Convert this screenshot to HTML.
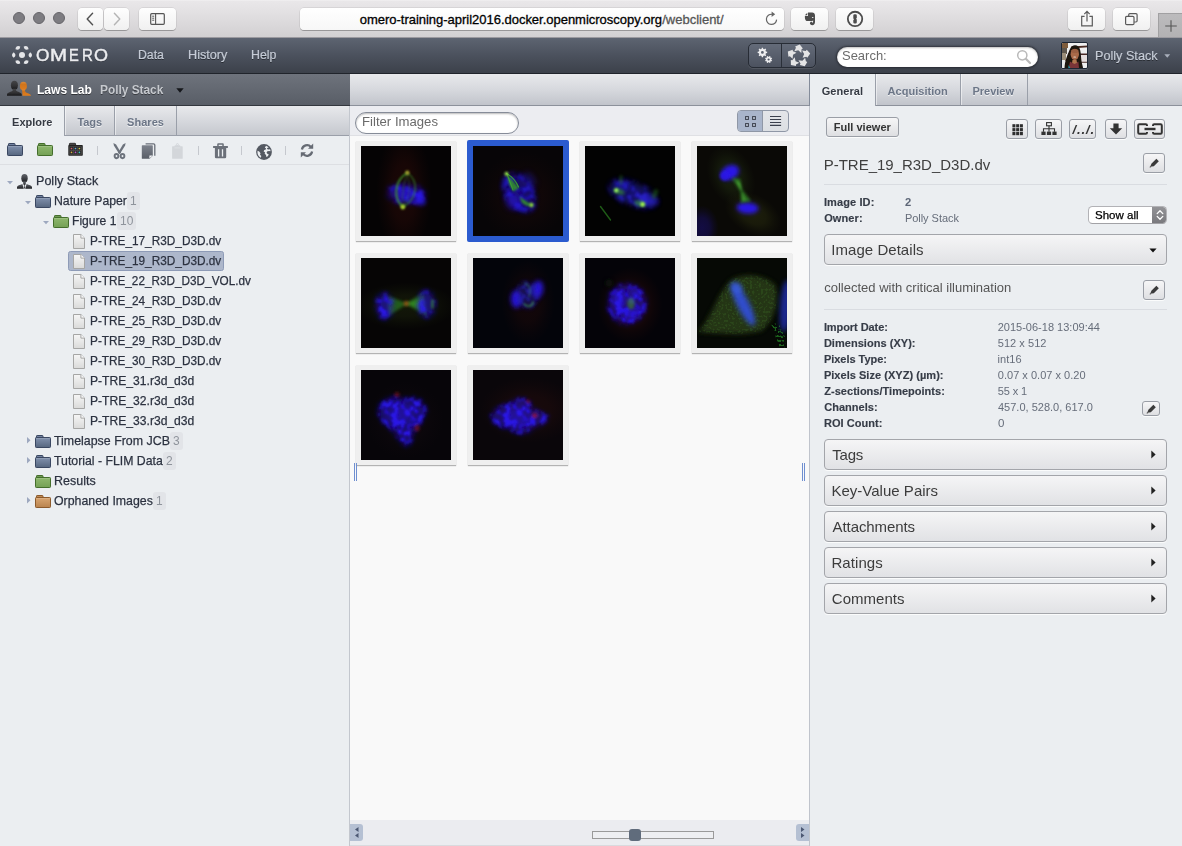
<!DOCTYPE html>
<html lang="en">
<head>
<meta charset="utf-8">
<title>OMERO webclient</title>
<style>

*{box-sizing:border-box;margin:0;padding:0}
html,body{width:1182px;height:846px;overflow:hidden;background:#ebeef1}
body{font-family:"Liberation Sans",Arial,Helvetica,sans-serif;font-size:13px;color:#3f4550;position:relative}
#app{position:absolute;left:0;top:38px;width:1182px;height:808px;overflow:hidden;will-change:transform}
#appi{position:absolute;left:0;top:-38px;width:1182px;height:846px}
.t{position:absolute;white-space:nowrap;display:block}
.a{position:absolute;display:block}
svg{position:absolute;display:block;overflow:visible}
/* Safari chrome */
#chrome{position:absolute;left:0;top:0;width:1182px;height:38px;background:linear-gradient(#f4f3f4 0,#e9e7e9 1px,#e4e2e4 10px,#d2d0d2 37px,#a3a1a5 37px,#94939a 38px)}

.tl{position:absolute;top:11.800px;width:12.400px;height:12.400px;border-radius:50%;background:#7d7c81;border:1px solid #66656a}
.sbtn{position:absolute;top:8px;height:22px;border-radius:4px;background:linear-gradient(#fefefe,#f0f0f0);box-shadow:0 0 0 .5px rgba(0,0,0,.13),0 1px .5px rgba(0,0,0,.24)}
#url{position:absolute;left:300px;top:8px;width:484px;height:22px;border-radius:4px;background:linear-gradient(#fff,#f7f7f7);box-shadow:0 0 0 .5px rgba(0,0,0,.13),0 1px .5px rgba(0,0,0,.24)}
#newtab{position:absolute;left:1158px;top:13px;width:24px;height:24px;background:linear-gradient(#bcbbbd,#b3b2b4);border-left:1px solid #a1a0a2;border-top:1px solid #a1a0a2}
/* OMERO header */
#hdr{position:absolute;left:0;top:37px;width:1182px;height:37px;background:linear-gradient(#5e6572 0,#4b515d 50%,#3b4049 100%)}
#hdr:after{content:"";position:absolute;left:0;top:36px;width:1182px;height:1px;background:#20242b}
.nav{color:#c6ccd7;-webkit-text-stroke:.2px #c6ccd7;text-shadow:0 1px 0 rgba(0,0,0,.45)}
#hbtn{position:absolute;left:748.300px;top:43.200px;width:67.400px;height:25.200px;border-radius:5px;border:1.300px solid #272c35;background:linear-gradient(#646b79,#4c525f);box-shadow:0 1px 0 rgba(255,255,255,.1)}
#hbtn i{position:absolute;left:31.500px;top:0;width:1.200px;height:23px;background:#2a2f38}
#search{position:absolute;left:837px;top:47px;width:201px;height:20px;border-radius:10px;background:#fff;box-shadow:0 0 2px 1px rgba(20,22,28,.55),inset 0 1px 2px rgba(0,0,0,.25)}
#avatar{position:absolute;left:1061px;top:42px;width:27px;height:27px;border:1px solid #1c2635;border-radius:2px;background:#4a3a30;overflow:hidden;box-shadow:0 1px 0 rgba(255,255,255,.15)}
/* group bar */
#gbar{position:absolute;left:0;top:74px;width:350px;height:32px;background:linear-gradient(#6e737c,#585d66)}
#gbar:after{content:"";position:absolute;left:0;top:31px;width:350px;height:1px;background:#33373e}
.lbar{position:absolute;top:74px;height:32px;background:linear-gradient(#e8e9ec,#d6d8dd 50%,#c0c3ca)}
.lbar:after{content:"";position:absolute;left:0;bottom:0;width:100%;height:1px;background:#8c919b}
.tab{position:absolute;top:0;border-right:1px solid #9a9fa9;box-shadow:inset 1px 0 0 rgba(255,255,255,.5)}
.tab.on{background:#ebeef1;z-index:2;box-shadow:none}
.tabt{color:#6c7687;text-shadow:0 1px 0 rgba(255,255,255,.7);z-index:3}
.tabt.on{color:#353a43}
/* left */
#left{position:absolute;left:0;top:106px;width:350px;height:740px;background:#ebeef1}
#lborder{position:absolute;left:349px;top:106px;width:1px;height:740px;background:#c3c7ce}
#ltabs{position:absolute;left:0;top:106px;width:349px;height:30px;background:linear-gradient(#e8e9ec,#d6d8dd 50%,#c4c7cd)}
#ltabs:after{content:"";position:absolute;left:0;bottom:0;width:100%;height:1px;background:#9a9fa9}
#ltoolb{position:absolute;left:0;top:164px;width:349px;height:1px;background:#dddfe3}
.tsep{position:absolute;top:146px;width:1px;height:9px;background:#c5c8ce}
.tr{color:#2c3240;-webkit-text-stroke:.25px #2c3240}
.cnt{position:absolute;height:18px;border-radius:3px;background:#e2e4e8}
.sel{position:absolute;border:1px solid #8e9bb7;border-radius:2.500px;background:#adb7cb}
/* center */
#center{position:absolute;left:350px;top:106px;width:459px;height:740px;background:#f9f9f9}
#cfilter{position:absolute;left:350px;top:106px;width:459px;height:30px;background:#ecedf1}
#cfilter:after{content:"";position:absolute;left:0;bottom:0;width:100%;height:1px;background:#dfe0e4}
#finput{position:absolute;left:355px;top:112px;width:164px;height:22px;border:1px solid #868c98;border-radius:11px;background:#fff;box-shadow:inset 0 1px 2px rgba(0,0,0,.28)}
.th{position:absolute;width:100px;height:100px;background:#efefef;box-shadow:0 1px 1px rgba(0,0,0,.28)}
.th svg{left:5px;top:5px}
.th.s{background:#2b5bcf;box-shadow:0 0 0 1px #2b5bcf;border-radius:1px}
#cbot{position:absolute;left:350px;top:820px;width:459px;height:26px;background:#ebecf0}
#cbot:after{content:"";position:absolute;left:0;top:25px;width:100%;height:1px;background:#d9dade}
.cb{position:absolute;top:824px;width:13px;height:17px;background:#b5c0d3}
.hd{position:absolute;top:463px;width:1px;height:18px;background:#6f8fd0}
#strack{position:absolute;left:592px;top:831px;width:122px;height:8px;border:1px solid #9a9a9a;background:#eeeff2}
#sthumb{position:absolute;left:629px;top:829px;width:12px;height:12px;border-radius:3px;background:#606c7c}
#vt{position:absolute;left:737px;top:110px;width:52px;height:22px;border:1px solid #8f97a6;border-radius:4px;background:linear-gradient(#e3e5e9,#dcdfe3);overflow:hidden}
#vt i{position:absolute;left:0;top:0;width:25px;height:20px;background:#a9b5cb;border-right:1px solid #8f97a6}
/* right */
#right{position:absolute;left:810px;top:106px;width:372px;height:740px;background:#ebeef1}
#rborder{position:absolute;left:809px;top:74px;width:1px;height:772px;background:linear-gradient(#848c9a 0,#848c9a 32px,#c0c4cc 32px)}
.btn{position:absolute;border:1px solid #9a9ea6;border-radius:3px;background:linear-gradient(#f6f6f7,#dedfe2);box-shadow:0 1px 0 rgba(255,255,255,.8)}
.acc{position:absolute;left:824px;width:343px;height:31px;border:1px solid #a3a5aa;border-radius:4px;background:linear-gradient(#f5f5f6,#e1e2e5);box-shadow:0 1px 0 rgba(255,255,255,.8)}
.hr{position:absolute;left:824px;width:343px;height:1px;background:#d9dce1}
.k{color:#363c47;-webkit-text-stroke:.15px #363c47}
.v{color:#666d7a}

</style>
</head>
<body>
<div id="chrome">
<div class="tl" style="left:13px"></div>
<div class="tl" style="left:33px"></div>
<div class="tl" style="left:53px"></div>
<div class="sbtn" style="left:78px;width:25px"></div>
<div class="sbtn" style="left:104px;width:25px"></div>
<div class="sbtn" style="left:139px;width:37px"></div>
<div id="url"></div>
<div class="sbtn" style="left:791px;width:37px"></div>
<div class="sbtn" style="left:836px;width:37px"></div>
<div class="sbtn" style="left:1068px;width:37px"></div>
<div class="sbtn" style="left:1113px;width:37px"></div>
<div id="newtab"></div>
<svg style="left:78px;top:8px" width="25" height="22" viewBox="0 0 25 22"><path d="M14.6 5.2 L9.2 11 L14.6 16.8" fill="none" stroke="#505050" stroke-width="1.4" stroke-linecap="round" stroke-linejoin="round"/></svg>
<svg style="left:104px;top:8px" width="25" height="22" viewBox="0 0 25 22"><path d="M10.4 5.2 L15.8 11 L10.4 16.8" fill="none" stroke="#b4b4b4" stroke-width="1.4" stroke-linecap="round" stroke-linejoin="round"/></svg>
<svg style="left:139px;top:8px" width="37" height="22" viewBox="0 0 37 22"><rect x="11.7" y="5.7" width="13.6" height="10.6" rx="1" fill="none" stroke="#555" stroke-width="1.2"/><path d="M16.6 5.7V16.3" stroke="#555" stroke-width="1.1"/><path d="M13.2 8.2h2M13.2 10.2h2M13.2 12.2h2" stroke="#555" stroke-width="1"/></svg>
<svg style="left:764px;top:10px" width="16" height="18" viewBox="0 0 16 18"><path d="M12.6 9.6a5.1 5.1 0 1 1-4.4-5.3" fill="none" stroke="#666" stroke-width="1.2"/><path d="M7.6 1.4l3.6 2.8-3.6 2.7z" fill="#666"/></svg>
<svg style="left:803px;top:11px" width="14" height="16" viewBox="0 0 14 16"><g fill="#4c4c4c"><path d="M5 1.600h4.100c1.800 0 2.900 1 2.900 3v6.500c0 2-1 3.100-2.700 3.100-1.500 0-2.400-.8-2.400-1.900 0-.9.700-1.500 1.400-1.500.7 0 1.200.5 1.200 1.100.5-.2.600-.8.600-1.600v-.9c-.6.500-1.400.7-2.400.7H4.600C3 10.100 1.900 8.700 1.900 6.700V4.900H5z"/><path d="M1.900 4.200L4.300 1.700V4.200z"/></g><ellipse cx="9.700" cy="6.500" rx=".8" ry=".55" fill="#f2f2f2"/></svg>
<svg style="left:846px;top:10px" width="18" height="18" viewBox="0 0 18 18"><circle cx="9.050" cy="8.950" r="7.200" fill="none" stroke="#4d4d4d" stroke-width="1.800"/><path d="M7.300 5.600q0-1.300 1.300-1.300h.9q1.300 0 1.300 1.300v2.300l-.8.800.8.800v2.800q0 1.300-1.300 1.300h-.9q-1.300 0-1.300-1.300V10l.8-.8-.8-.8z" fill="#4d4d4d"/></svg>
<svg style="left:1080px;top:10px" width="14" height="18" viewBox="0 0 14 18"><path d="M4.600 6.400H1.700v9.400h10.600V6.400H9.400" fill="none" stroke="#5a5a5a" stroke-width="1.200"/><path d="M7 11.500V1.500M4.300 4.100 7 1.400l2.700 2.700" fill="none" stroke="#5a5a5a" stroke-width="1.200"/></svg>
<svg style="left:1124px;top:12px" width="15" height="14" viewBox="0 0 15 14"><rect x="1.600" y="4.300" width="8.400" height="8.400" rx="1.200" fill="none" stroke="#5a5a5a" stroke-width="1.200"/><path d="M4.700 4.200V2.800q0-1.200 1.200-1.200h6q1.200 0 1.200 1.200v6q0 1.200-1.200 1.200h-1.700" fill="none" stroke="#5a5a5a" stroke-width="1.200"/></svg>
<svg style="left:1164px;top:19px" width="14" height="14" viewBox="0 0 14 14"><path d="M7 1.200v11.600M1.200 7h11.600" stroke="#555" stroke-width="1.100"/></svg>
<span class="t" style="left:359.78px;top:12.00px;font-size:13px;line-height:16px;letter-spacing:-0.021px;color:#000;-webkit-text-stroke:.3px #000;">omero-training-april2016.docker.openmicroscopy.org</span>
<span class="t" style="left:662.20px;top:12.00px;font-size:13px;line-height:16px;letter-spacing:-0.003px;color:#555;-webkit-text-stroke:.3px #555;">/webclient/</span>
</div>
<div id="app"><div id="appi">
<div id="hdr"></div>
<svg style="left:10.800px;top:43.600px" width="22" height="22" viewBox="-11 -11 22 22"><g fill="#e4e5e8"><path transform="rotate(0) translate(8.3 0)" d="M0 -2.8Q3.500 0 0 2.800Q-3.500 0 0 -2.800Z"/><path transform="rotate(60) translate(8.3 0)" d="M0 -2.8Q3.500 0 0 2.800Q-3.500 0 0 -2.800Z"/><path transform="rotate(120) translate(8.3 0)" d="M0 -2.8Q3.500 0 0 2.800Q-3.500 0 0 -2.800Z"/><path transform="rotate(180) translate(8.3 0)" d="M0 -2.8Q3.500 0 0 2.800Q-3.500 0 0 -2.800Z"/><path transform="rotate(240) translate(8.3 0)" d="M0 -2.8Q3.500 0 0 2.800Q-3.500 0 0 -2.800Z"/><path transform="rotate(300) translate(8.3 0)" d="M0 -2.8Q3.500 0 0 2.800Q-3.500 0 0 -2.800Z"/><circle cx="0" cy="0" r="3"/></g></svg>
<div id="logo" aria-label="OMERO"><span class="t" style="left:35.92px;top:44.70px;font-size:17px;line-height:21px;letter-spacing:0.000px;transform:scaleX(1.0133);transform-origin:0 0;color:#ecedf0;text-shadow:0 1px 0 rgba(0,0,0,.3);-webkit-text-stroke:.45px #ecedf0;">O</span><span class="t" style="left:50.36px;top:44.70px;font-size:17px;line-height:21px;letter-spacing:0.000px;transform:scaleX(1.2026);transform-origin:0 0;color:#ecedf0;text-shadow:0 1px 0 rgba(0,0,0,.3);-webkit-text-stroke:.45px #ecedf0;">M</span><span class="t" style="left:69.33px;top:44.70px;font-size:17px;line-height:21px;letter-spacing:0.000px;transform:scaleX(0.8635);transform-origin:0 0;color:#ecedf0;text-shadow:0 1px 0 rgba(0,0,0,.3);-webkit-text-stroke:.45px #ecedf0;">E</span><span class="t" style="left:81.70px;top:44.70px;font-size:17px;line-height:21px;letter-spacing:0.000px;transform:scaleX(0.8824);transform-origin:0 0;color:#ecedf0;text-shadow:0 1px 0 rgba(0,0,0,.3);-webkit-text-stroke:.45px #ecedf0;">R</span><span class="t" style="left:94.29px;top:44.70px;font-size:17px;line-height:21px;letter-spacing:0.000px;transform:scaleX(1.0562);transform-origin:0 0;color:#ecedf0;text-shadow:0 1px 0 rgba(0,0,0,.3);-webkit-text-stroke:.45px #ecedf0;">O</span></div>
<span class="t nav" style="left:137.82px;top:47.30px;font-size:13px;line-height:16px;letter-spacing:0.000px;transform:scaleX(0.9450);transform-origin:0 0;">Data</span>
<span class="t nav" style="left:187.59px;top:47.30px;font-size:13px;line-height:16px;letter-spacing:0.000px;transform:scaleX(0.9749);transform-origin:0 0;">History</span>
<span class="t nav" style="left:250.81px;top:47.30px;font-size:13px;line-height:16px;letter-spacing:0.000px;transform:scaleX(0.9501);transform-origin:0 0;">Help</span>
<div id="hbtn"><i></i></div>
<svg style="left:749px;top:43px" width="33" height="25" viewBox="749 43 33 25"><path fill-rule="evenodd" fill="#eeeef0" d="M761.56 48.90L761.76 47.64L763.04 47.64L763.24 48.90L764.28 49.33L765.31 48.58L766.22 49.49L765.47 50.52L765.90 51.56L767.16 51.76L767.16 53.04L765.90 53.24L765.47 54.28L766.22 55.31L765.31 56.22L764.28 55.47L763.24 55.90L763.04 57.16L761.76 57.16L761.56 55.90L760.52 55.47L759.49 56.22L758.58 55.31L759.33 54.28L758.90 53.24L757.64 53.04L757.64 51.76L758.90 51.56L759.33 50.52L758.58 49.49L759.49 48.58L760.52 49.33ZM761.00 52.40a1.4 1.4 0 1 0 2.8 0a1.4 1.4 0 1 0 -2.8 0ZM769.03 56.73L769.54 55.92L770.45 56.30L770.24 57.23L770.86 57.85L771.79 57.63L772.17 58.54L771.36 59.05L771.37 59.93L772.18 60.44L771.80 61.35L770.87 61.14L770.25 61.76L770.47 62.69L769.56 63.07L769.05 62.26L768.17 62.27L767.66 63.08L766.75 62.70L766.96 61.77L766.34 61.15L765.41 61.37L765.03 60.46L765.84 59.95L765.83 59.07L765.02 58.56L765.40 57.65L766.33 57.86L766.95 57.24L766.73 56.31L767.64 55.93L768.15 56.74ZM767.50 59.50a1.1 1.1 0 1 0 2.2 0a1.1 1.1 0 1 0 -2.2 0Z"/></svg>
<svg style="left:785px;top:43px" width="28" height="25" viewBox="785 43 28 25"><g fill="#e4e4e5"><path transform="translate(798.700 56.200) rotate(0) translate(0 -7.500) rotate(14)" d="M-4 -1.200L0 -4.400L4 -1.200L2.900 -.2L3.600 3.500L0 1.700L-3.600 3.500L-2.900 -.2Z"/><path transform="translate(798.700 56.200) rotate(72) translate(0 -7.500) rotate(14)" d="M-4 -1.200L0 -4.400L4 -1.200L2.900 -.2L3.600 3.500L0 1.700L-3.600 3.500L-2.900 -.2Z"/><path transform="translate(798.700 56.200) rotate(144) translate(0 -7.500) rotate(14)" d="M-4 -1.200L0 -4.400L4 -1.200L2.900 -.2L3.600 3.500L0 1.700L-3.600 3.500L-2.900 -.2Z"/><path transform="translate(798.700 56.200) rotate(216) translate(0 -7.500) rotate(14)" d="M-4 -1.200L0 -4.400L4 -1.200L2.900 -.2L3.600 3.500L0 1.700L-3.600 3.500L-2.900 -.2Z"/><path transform="translate(798.700 56.200) rotate(288) translate(0 -7.500) rotate(14)" d="M-4 -1.200L0 -4.400L4 -1.200L2.900 -.2L3.600 3.500L0 1.700L-3.600 3.500L-2.900 -.2Z"/></g></svg>
<div id="search"></div>
<span class="t" style="left:841.72px;top:47.00px;font-size:13.5px;line-height:17px;letter-spacing:0.000px;transform:scaleX(0.9608);transform-origin:0 0;color:#6b6b6b;">Search:</span>
<svg style="left:1016px;top:49px" width="16" height="16" viewBox="0 0 16 16"><circle cx="6.300" cy="6.300" r="4.600" fill="none" stroke="#b9b9b9" stroke-width="1.500"/><path d="M9.800 9.800l4.200 4.200" stroke="#b9b9b9" stroke-width="2.200" stroke-linecap="round"/></svg>
<div id="avatar"><svg style="left:0;top:0" width="25" height="25" viewBox="0 0 25 25">
<defs><filter id="av"><feGaussianBlur stdDeviation=".55"/></filter></defs>
<rect width="25" height="25" fill="#efeff0"/>
<g filter="url(#av)">
<rect x="-1" y="-1" width="7" height="6" fill="#7e5c3c"/>
<rect x="-1" y="5" width="6" height="6" fill="#5d564e"/>
<rect x="-1" y="10" width="5" height="8" fill="#9a8c78"/>
<rect x="-1" y="17" width="4" height="9" fill="#e8eaea"/>
<path d="M9 3.600L26 2.400V4.200L9 5.400z" fill="#4a2a24"/>
<path d="M18 10.600h8v1.300h-8zM18 18.600h8v1.200h-8z" fill="#4a2c28"/>
<path d="M19 12h7v6.500h-7z" fill="#e6dede"/>
<path d="M2.500 25C3 17 5.500 12 7.500 7 9 3.600 11 2.300 13 2.300c2.600 0 4.400 1.600 5.200 5 .8 3.600.8 8 1.400 11.500.4 2.400 1.200 4.400 1.400 6.200z" fill="#1b1210"/>
<ellipse cx="12.800" cy="11.300" rx="4.200" ry="5.600" fill="#a96a49"/>
<ellipse cx="12.800" cy="8" rx="3.600" ry="2" fill="#9a5e42"/>
<ellipse cx="12.700" cy="14" rx="1.500" ry=".6" fill="#ead8cc"/>
<path d="M8 18.500c1.500 1 3 1.500 4.600 1.500s3-.6 3.800-1.500l.6 6.500H6.600z" fill="#7a3438"/>
<path d="M10.500 16.800h4l.5 3-2.500 1.200-2.400-1.200z" fill="#b0744e"/>
<path d="M6.600 22l1.600 3H6.400z" fill="#1a9cab"/>
</g></svg></div>
<span class="t nav" style="left:1095.39px;top:47.60px;font-size:13px;line-height:16px;letter-spacing:0.000px;transform:scaleX(0.9730);transform-origin:0 0;">Polly Stack</span>
<svg style="left:1164px;top:53.500px" width="6.500" height="4" viewBox="0 0 6.500 4"><path d="M.3.300h5.900L3.250 3.700z" fill="#a9afbb"/></svg>
<div id="gbar"></div>
<svg style="left:7px;top:80px" width="25" height="16" viewBox="0 0 25 16">
<defs><linearGradient id="gk" x1="0" y1="0" x2="0" y2="1"><stop offset="0" stop-color="#454547"/><stop offset=".6" stop-color="#303032"/><stop offset="1" stop-color="#161618"/></linearGradient>
<linearGradient id="go" x1="0" y1="0" x2="0" y2="1"><stop offset="0" stop-color="#d98a3a"/><stop offset=".3" stop-color="#d0741c"/><stop offset="1" stop-color="#e07e1e"/></linearGradient></defs>
<g fill="url(#go)"><ellipse cx="16.400" cy="6.100" rx="3.500" ry="4.300"/><path d="M15.600 15.800H24C24 14.100 21.200 13.400 19.600 12.700 18.300 12.100 17.900 10.800 17.900 9.400H15z"/></g>
<g fill="url(#gk)"><ellipse cx="7.400" cy="5.300" rx="3.500" ry="4.500"/><path d="M0 15.800H14.800V14.400C14.500 12.500 10.500 12.100 9 10.600V8.800H5.800V10.600C4.300 12.100.3 12.500 0 14.400z"/></g></svg>
<span class="t" style="left:37.02px;top:82.00px;font-size:13px;line-height:16px;letter-spacing:0.000px;transform:scaleX(0.9265);transform-origin:0 0;font-weight:bold;color:#fff;text-shadow:0 1px 0 rgba(0,0,0,.5);">Laws Lab</span>
<span class="t" style="left:99.63px;top:82.00px;font-size:13px;line-height:16px;letter-spacing:0.000px;transform:scaleX(0.9129);transform-origin:0 0;font-weight:bold;color:#c6c9ce;text-shadow:0 1px 0 rgba(0,0,0,.4);">Polly Stack</span>
<svg style="left:176px;top:88px" width="8" height="5" viewBox="0 0 8 5"><path d="M.3.300h7.400L4 4.700z" fill="#15171b"/></svg>
<div class="lbar" style="left:350px;width:460px"></div>
<div class="lbar" style="left:810px;width:372px"><div class="tab on" style="left:0;width:66px;height:32px"></div><div class="tab" style="left:66px;width:85px;height:31px"></div><div class="tab" style="left:151px;width:66.500px;height:31px"></div></div>
<div id="left"></div>
<div id="ltabs"><div class="tab on" style="left:0;width:65px;height:30px"></div><div class="tab" style="left:65px;width:50px;height:29px"></div><div class="tab" style="left:115px;width:62px;height:29px"></div></div>
<div id="lborder"></div>
<span class="t tabt on" style="left:12.09px;top:115.00px;font-size:11px;line-height:14px;letter-spacing:-0.012px;font-weight:bold;">Explore</span>
<span class="t tabt" style="left:77.49px;top:115.00px;font-size:11px;line-height:14px;letter-spacing:-0.088px;font-weight:bold;">Tags</span>
<span class="t tabt" style="left:127.02px;top:115.00px;font-size:11px;line-height:14px;letter-spacing:0.055px;font-weight:bold;">Shares</span>
<div id="ltoolb"></div>
<svg style="left:7px;top:143px" width="16" height="13" viewBox="0 0 16 13"><defs><linearGradient id="g8292ae" x1="0" y1="0" x2="0" y2="1"><stop offset="0" stop-color="#8292ae"/><stop offset="1" stop-color="#56667f"/></linearGradient></defs><path d="M1.500 2.600V1.100q0-.6.600-.6h5.300q.6 0 .6.600v1.500z" fill="#7282a0" stroke="#3a4761" stroke-width="1"/><path d="M1.300 2.500h13.400q.8 0 .8.800v8.400q0 .8-.8.800H1.300q-.8 0-.8-.8V3.300q0-.8.800-.8z" fill="url(#g8292ae)" stroke="#3a4761" stroke-width="1"/><path d="M1.300 3.500h13.400" stroke="#fff" stroke-width=".6" opacity=".22"/></svg>
<svg style="left:37px;top:143px" width="16" height="13" viewBox="0 0 16 13"><defs><linearGradient id="g8fb86e" x1="0" y1="0" x2="0" y2="1"><stop offset="0" stop-color="#8fb86e"/><stop offset="1" stop-color="#74a055"/></linearGradient></defs><path d="M1.500 2.600V1.100q0-.6.600-.6h5.300q.6 0 .6.600v1.500z" fill="#6f9a52" stroke="#446e2c" stroke-width="1"/><path d="M1.300 2.500h13.400q.8 0 .8.800v8.400q0 .8-.8.800H1.300q-.8 0-.8-.8V3.300q0-.8.800-.8z" fill="url(#g8fb86e)" stroke="#446e2c" stroke-width="1"/><path d="M1.300 3.500h13.400" stroke="#fff" stroke-width=".6" opacity=".22"/></svg>
<svg style="left:68px;top:143px" width="15" height="13" viewBox="0 0 15 13"><path d="M1.400 2.200V.9q0-.6.600-.6h5q.6 0 .6.600v1.300z" fill="#5a5654" stroke="#1c1c1c" stroke-width=".8"/><rect x=".3" y="2" width="14.500" height="10.800" rx=".8" fill="#222"/><rect x="1.300" y="3.300" width="12.500" height="8.400" fill="#4c4a49"/><rect x="1.90" y="4.00" width="3.200" height="3" fill="#2b2b2b"/><circle cx="3.5" cy="5.5" r=".85" fill="#d85468"/><rect x="5.90" y="4.00" width="3.200" height="3" fill="#2b2b2b"/><circle cx="7.5" cy="5.5" r=".85" fill="#58a8d8"/><rect x="9.80" y="4.00" width="3.200" height="3" fill="#2b2b2b"/><circle cx="11.4" cy="5.5" r=".85" fill="#c8c848"/><rect x="1.90" y="7.80" width="3.200" height="3" fill="#2b2b2b"/><circle cx="3.5" cy="9.3" r=".85" fill="#d8b040"/><rect x="5.90" y="7.80" width="3.200" height="3" fill="#2b2b2b"/><circle cx="7.5" cy="9.3" r=".85" fill="#b858c8"/><rect x="9.80" y="7.80" width="3.200" height="3" fill="#2b2b2b"/><circle cx="11.4" cy="9.3" r=".85" fill="#40c4c4"/></svg>
<div class="tsep" style="left:97px"></div>
<div class="tsep" style="left:198px"></div>
<div class="tsep" style="left:241px"></div>
<div class="tsep" style="left:285px"></div>
<svg style="left:113px;top:143px" width="13" height="16" viewBox="0 0 13 16"><g fill="#6c727c"><path d="M.4 0L3.100 1.500 8 9.700 6.200 11 .9 2.600Z"/><path d="M12.600 0L9.900 1.500 5 9.700 6.800 11 12.100 2.600Z"/></g><g fill="none" stroke="#6c727c" stroke-width="1.900"><ellipse cx="3.500" cy="13.100" rx="1.900" ry="2.100"/><ellipse cx="9.500" cy="13.100" rx="1.900" ry="2.100"/></g></svg>
<svg style="left:141px;top:143px" width="15" height="16" viewBox="0 0 15 16"><defs><linearGradient id="gcp" x1="0" y1="0" x2="0" y2="1"><stop offset="0" stop-color="#7d828c"/><stop offset="1" stop-color="#595e67"/></linearGradient></defs><path d="M4.600.8h8q1.200 0 1.200 1.200v10.800" fill="none" stroke="#6a6f79" stroke-width="1.300"/><path d="M1.400 2.200h9.800q.6 0 .6.600v10l-3.200 3H1.400q-.6 0-.6-.6V2.800q0-.6.600-.6z" fill="url(#gcp)"/><path d="M8.400 15.600v-3.100h3.400z" fill="#f4f5f7"/></svg>
<svg style="left:172px;top:143px" width="11" height="16" viewBox="0 0 11 16"><rect x=".1" y="3.300" width="10.600" height="12.500" rx=".6" fill="#d3d6da"/><rect x="2.600" y="2.200" width="5.600" height="2.400" rx=".5" fill="#d3d6da"/><circle cx="5.400" cy="1.500" r="1" fill="none" stroke="#d3d6da" stroke-width=".9"/><path d="M2.400 4.900h6" stroke="#e3e5e8" stroke-width=".7"/></svg>
<svg style="left:212px;top:143px" width="17" height="16" viewBox="0 0 17 16"><g fill="#6b7079"><path d="M5.200 3V1.300q0-1 1-1h4.600q1 0 1 1V3h-1.500V1.800H6.700V3z"/><rect x="1" y="2.900" width="15" height="2" rx=".6"/><path d="M2.900 4.900h11.300v9q0 1.300-1.300 1.300H4.200q-1.300 0-1.300-1.300z"/></g><path d="M6.600 6.200v7.200M10.500 6.200v7.200" stroke="#ebeef1" stroke-width="1.300"/></svg>
<svg style="left:256px;top:144px" width="16" height="16" viewBox="0 0 16 16"><circle cx="8" cy="8" r="7.900" fill="#545962"/><path d="M10 1.800c1 .3 2 .9 2.700 1.700l-1.500.5-.2 1 1.400.6 1.700-.3c.3.600.4 1.300.4 2l-1.300-.4-1.800.3-.8 1.200.6 1.400 1.400.3-.3 1.300c-.5.700-1.200 1.200-1.900 1.500l-.4-2-1.300-1.100.3-1.500-1.400-.9.700-1.400 1.500-.4.200-1.300-1.200-.5zM1.500 6.800l1.700.8 1.300 1.600-.5 1.500 1.300 1.300-.5 1.800C3.200 13 1.900 11.300 1.500 9.300z" fill="#ebeef1"/></svg>
<svg style="left:300px;top:143px" width="14" height="15" viewBox="0 0 14 15"><g fill="none" stroke="#666b74" stroke-width="2.200"><path d="M1.900 6.500a5.200 5.200 0 0 1 9-2.600"/><path d="M12.100 8.500a5.200 5.200 0 0 1-9 2.600"/></g><path d="M13.200.6v5.200H8z" fill="#666b74"/><path d="M.8 14.400V9.200H6z" fill="#666b74"/></svg>
<div class="sel" style="left:68px;top:251px;width:156px;height:20px"></div>
<svg style="left:7px;top:181.1px" width="6" height="3.200" viewBox="0 0 6 3.200"><path d="M0 0h6L3 3.200z" fill="#9da8bf"/></svg>
<svg style="left:17px;top:174px" width="15" height="15" viewBox="0 0 15 15"><defs><linearGradient id="gu" x1="0" y1="0" x2="0" y2="1"><stop offset="0" stop-color="#62656b"/><stop offset=".55" stop-color="#3c3e43"/><stop offset="1" stop-color="#1f2023"/></linearGradient></defs><g fill="url(#gu)"><ellipse cx="7.500" cy="4.200" rx="3.200" ry="4.200"/><path d="M6.200 7.500h2.600v2.600L7.500 12 6.200 10.100z"/><path d="M0 14.700V13.100C.3 11.500 3 10.900 5.400 10L6.800 14.700Z"/><path d="M15 14.700V13.100C14.700 11.500 12 10.900 9.600 10L8.200 14.700Z"/><path d="M7.500 11.800l.6 1-.4 1.900h-.4l-.4-1.900z"/></g></svg>
<span class="t tr" style="left:35.59px;top:173.00px;font-size:13px;line-height:16px;letter-spacing:0.000px;transform:scaleX(0.9667);transform-origin:0 0;">Polly Stack</span>
<svg style="left:25px;top:201.1px" width="6" height="3.200" viewBox="0 0 6 3.200"><path d="M0 0h6L3 3.200z" fill="#9da8bf"/></svg>
<svg style="left:35px;top:195px" width="16" height="13" viewBox="0 0 16 13"><defs><linearGradient id="g8292ae" x1="0" y1="0" x2="0" y2="1"><stop offset="0" stop-color="#8292ae"/><stop offset="1" stop-color="#56667f"/></linearGradient></defs><path d="M1.500 2.600V1.100q0-.6.600-.6h5.300q.6 0 .6.600v1.500z" fill="#7282a0" stroke="#3a4761" stroke-width="1"/><path d="M1.300 2.500h13.400q.8 0 .8.800v8.400q0 .8-.8.800H1.300q-.8 0-.8-.8V3.300q0-.8.800-.8z" fill="url(#g8292ae)" stroke="#3a4761" stroke-width="1"/><path d="M1.300 3.500h13.400" stroke="#fff" stroke-width=".6" opacity=".22"/></svg>
<span class="t tr" style="left:53.52px;top:193.00px;font-size:13px;line-height:16px;letter-spacing:0.000px;transform:scaleX(0.9433);transform-origin:0 0;">Nature Paper</span>
<div class="cnt" style="left:127px;top:192px;width:13px"></div>
<span class="t" style="left:130.30px;top:193.00px;font-size:13px;line-height:16px;letter-spacing:0.000px;transform:scaleX(0.9200);transform-origin:0 0;color:#8e939b;">1</span>
<svg style="left:43px;top:221.1px" width="6" height="3.200" viewBox="0 0 6 3.200"><path d="M0 0h6L3 3.200z" fill="#9da8bf"/></svg>
<svg style="left:53px;top:215px" width="16" height="13" viewBox="0 0 16 13"><defs><linearGradient id="g8fb86e" x1="0" y1="0" x2="0" y2="1"><stop offset="0" stop-color="#8fb86e"/><stop offset="1" stop-color="#74a055"/></linearGradient></defs><path d="M1.500 2.600V1.100q0-.6.600-.6h5.300q.6 0 .6.600v1.500z" fill="#6f9a52" stroke="#446e2c" stroke-width="1"/><path d="M1.300 2.500h13.400q.8 0 .8.800v8.400q0 .8-.8.800H1.300q-.8 0-.8-.8V3.300q0-.8.800-.8z" fill="url(#g8fb86e)" stroke="#446e2c" stroke-width="1"/><path d="M1.300 3.500h13.400" stroke="#fff" stroke-width=".6" opacity=".22"/></svg>
<span class="t tr" style="left:71.53px;top:213.00px;font-size:13px;line-height:16px;letter-spacing:0.000px;transform:scaleX(0.9300);transform-origin:0 0;">Figure 1</span>
<div class="cnt" style="left:117px;top:212px;width:19px"></div>
<span class="t" style="left:120.10px;top:213.00px;font-size:13px;line-height:16px;letter-spacing:0.000px;transform:scaleX(0.9200);transform-origin:0 0;color:#8e939b;">10</span>
<svg style="left:73px;top:234px" width="12" height="15" viewBox="0 0 12 15"><defs><linearGradient id="gfi" x1="0" y1="0" x2="0" y2="1"><stop offset="0" stop-color="#f6f6f6"/><stop offset="1" stop-color="#dadad9"/></linearGradient></defs><path d="M.5.500h7.400l3.600 3.600v10.400H.5z" fill="url(#gfi)" stroke="#a6a6a5" stroke-width="1"/><path d="M7.900.5v3.600h3.600" fill="#fbfbfb" stroke="#a6a6a5" stroke-width="1"/></svg>
<span class="t tr" style="left:89.86px;top:233.00px;font-size:13px;line-height:16px;letter-spacing:0.000px;transform:scaleX(0.9083);transform-origin:0 0;">P-TRE_17_R3D_D3D.dv</span>
<svg style="left:73px;top:254px" width="12" height="15" viewBox="0 0 12 15"><defs><linearGradient id="gfi" x1="0" y1="0" x2="0" y2="1"><stop offset="0" stop-color="#f6f6f6"/><stop offset="1" stop-color="#dadad9"/></linearGradient></defs><path d="M.5.500h7.400l3.600 3.600v10.400H.5z" fill="url(#gfi)" stroke="#a6a6a5" stroke-width="1"/><path d="M7.900.5v3.600h3.600" fill="#fbfbfb" stroke="#a6a6a5" stroke-width="1"/></svg>
<span class="t tr" style="left:89.86px;top:253.00px;font-size:13px;line-height:16px;letter-spacing:0.000px;transform:scaleX(0.9083);transform-origin:0 0;">P-TRE_19_R3D_D3D.dv</span>
<svg style="left:73px;top:274px" width="12" height="15" viewBox="0 0 12 15"><defs><linearGradient id="gfi" x1="0" y1="0" x2="0" y2="1"><stop offset="0" stop-color="#f6f6f6"/><stop offset="1" stop-color="#dadad9"/></linearGradient></defs><path d="M.5.500h7.400l3.600 3.600v10.400H.5z" fill="url(#gfi)" stroke="#a6a6a5" stroke-width="1"/><path d="M7.900.5v3.600h3.600" fill="#fbfbfb" stroke="#a6a6a5" stroke-width="1"/></svg>
<span class="t tr" style="left:89.86px;top:273.00px;font-size:13px;line-height:16px;letter-spacing:0.000px;transform:scaleX(0.9053);transform-origin:0 0;">P-TRE_22_R3D_D3D_VOL.dv</span>
<svg style="left:73px;top:294px" width="12" height="15" viewBox="0 0 12 15"><defs><linearGradient id="gfi" x1="0" y1="0" x2="0" y2="1"><stop offset="0" stop-color="#f6f6f6"/><stop offset="1" stop-color="#dadad9"/></linearGradient></defs><path d="M.5.500h7.400l3.600 3.600v10.400H.5z" fill="url(#gfi)" stroke="#a6a6a5" stroke-width="1"/><path d="M7.900.5v3.600h3.600" fill="#fbfbfb" stroke="#a6a6a5" stroke-width="1"/></svg>
<span class="t tr" style="left:89.86px;top:293.00px;font-size:13px;line-height:16px;letter-spacing:0.000px;transform:scaleX(0.9083);transform-origin:0 0;">P-TRE_24_R3D_D3D.dv</span>
<svg style="left:73px;top:314px" width="12" height="15" viewBox="0 0 12 15"><defs><linearGradient id="gfi" x1="0" y1="0" x2="0" y2="1"><stop offset="0" stop-color="#f6f6f6"/><stop offset="1" stop-color="#dadad9"/></linearGradient></defs><path d="M.5.500h7.400l3.600 3.600v10.400H.5z" fill="url(#gfi)" stroke="#a6a6a5" stroke-width="1"/><path d="M7.900.5v3.600h3.600" fill="#fbfbfb" stroke="#a6a6a5" stroke-width="1"/></svg>
<span class="t tr" style="left:89.86px;top:313.00px;font-size:13px;line-height:16px;letter-spacing:0.000px;transform:scaleX(0.9083);transform-origin:0 0;">P-TRE_25_R3D_D3D.dv</span>
<svg style="left:73px;top:334px" width="12" height="15" viewBox="0 0 12 15"><defs><linearGradient id="gfi" x1="0" y1="0" x2="0" y2="1"><stop offset="0" stop-color="#f6f6f6"/><stop offset="1" stop-color="#dadad9"/></linearGradient></defs><path d="M.5.500h7.400l3.600 3.600v10.400H.5z" fill="url(#gfi)" stroke="#a6a6a5" stroke-width="1"/><path d="M7.900.5v3.600h3.600" fill="#fbfbfb" stroke="#a6a6a5" stroke-width="1"/></svg>
<span class="t tr" style="left:89.86px;top:333.00px;font-size:13px;line-height:16px;letter-spacing:0.000px;transform:scaleX(0.9083);transform-origin:0 0;">P-TRE_29_R3D_D3D.dv</span>
<svg style="left:73px;top:354px" width="12" height="15" viewBox="0 0 12 15"><defs><linearGradient id="gfi" x1="0" y1="0" x2="0" y2="1"><stop offset="0" stop-color="#f6f6f6"/><stop offset="1" stop-color="#dadad9"/></linearGradient></defs><path d="M.5.500h7.400l3.600 3.600v10.400H.5z" fill="url(#gfi)" stroke="#a6a6a5" stroke-width="1"/><path d="M7.900.5v3.600h3.600" fill="#fbfbfb" stroke="#a6a6a5" stroke-width="1"/></svg>
<span class="t tr" style="left:89.86px;top:353.00px;font-size:13px;line-height:16px;letter-spacing:0.000px;transform:scaleX(0.9083);transform-origin:0 0;">P-TRE_30_R3D_D3D.dv</span>
<svg style="left:73px;top:374px" width="12" height="15" viewBox="0 0 12 15"><defs><linearGradient id="gfi" x1="0" y1="0" x2="0" y2="1"><stop offset="0" stop-color="#f6f6f6"/><stop offset="1" stop-color="#dadad9"/></linearGradient></defs><path d="M.5.500h7.400l3.600 3.600v10.400H.5z" fill="url(#gfi)" stroke="#a6a6a5" stroke-width="1"/><path d="M7.900.5v3.600h3.600" fill="#fbfbfb" stroke="#a6a6a5" stroke-width="1"/></svg>
<span class="t tr" style="left:89.83px;top:373.00px;font-size:13px;line-height:16px;letter-spacing:0.000px;transform:scaleX(0.9312);transform-origin:0 0;">P-TRE_31.r3d_d3d</span>
<svg style="left:73px;top:394px" width="12" height="15" viewBox="0 0 12 15"><defs><linearGradient id="gfi" x1="0" y1="0" x2="0" y2="1"><stop offset="0" stop-color="#f6f6f6"/><stop offset="1" stop-color="#dadad9"/></linearGradient></defs><path d="M.5.500h7.400l3.600 3.600v10.400H.5z" fill="url(#gfi)" stroke="#a6a6a5" stroke-width="1"/><path d="M7.900.5v3.600h3.600" fill="#fbfbfb" stroke="#a6a6a5" stroke-width="1"/></svg>
<span class="t tr" style="left:89.83px;top:393.00px;font-size:13px;line-height:16px;letter-spacing:0.000px;transform:scaleX(0.9312);transform-origin:0 0;">P-TRE_32.r3d_d3d</span>
<svg style="left:73px;top:414px" width="12" height="15" viewBox="0 0 12 15"><defs><linearGradient id="gfi" x1="0" y1="0" x2="0" y2="1"><stop offset="0" stop-color="#f6f6f6"/><stop offset="1" stop-color="#dadad9"/></linearGradient></defs><path d="M.5.500h7.400l3.600 3.600v10.400H.5z" fill="url(#gfi)" stroke="#a6a6a5" stroke-width="1"/><path d="M7.900.5v3.600h3.600" fill="#fbfbfb" stroke="#a6a6a5" stroke-width="1"/></svg>
<span class="t tr" style="left:89.83px;top:413.00px;font-size:13px;line-height:16px;letter-spacing:0.000px;transform:scaleX(0.9312);transform-origin:0 0;">P-TRE_33.r3d_d3d</span>
<svg style="left:27px;top:437px" width="3.500" height="6.400" viewBox="0 0 3.500 6.400"><path d="M0 0v6.400L3.500 3.200z" fill="#9da8bf"/></svg>
<svg style="left:35px;top:435px" width="16" height="13" viewBox="0 0 16 13"><defs><linearGradient id="g8292ae" x1="0" y1="0" x2="0" y2="1"><stop offset="0" stop-color="#8292ae"/><stop offset="1" stop-color="#56667f"/></linearGradient></defs><path d="M1.500 2.600V1.100q0-.6.600-.6h5.300q.6 0 .6.600v1.500z" fill="#7282a0" stroke="#3a4761" stroke-width="1"/><path d="M1.300 2.500h13.400q.8 0 .8.800v8.400q0 .8-.8.800H1.300q-.8 0-.8-.8V3.300q0-.8.800-.8z" fill="url(#g8292ae)" stroke="#3a4761" stroke-width="1"/><path d="M1.300 3.500h13.400" stroke="#fff" stroke-width=".6" opacity=".22"/></svg>
<span class="t tr" style="left:54.25px;top:433.00px;font-size:13px;line-height:16px;letter-spacing:0.000px;transform:scaleX(0.9532);transform-origin:0 0;">Timelapse From JCB</span>
<div class="cnt" style="left:170px;top:432px;width:13px"></div>
<span class="t" style="left:172.58px;top:433.00px;font-size:13px;line-height:16px;letter-spacing:0.000px;transform:scaleX(0.9200);transform-origin:0 0;color:#8e939b;">3</span>
<svg style="left:27px;top:457px" width="3.500" height="6.400" viewBox="0 0 3.500 6.400"><path d="M0 0v6.400L3.500 3.200z" fill="#9da8bf"/></svg>
<svg style="left:35px;top:455px" width="16" height="13" viewBox="0 0 16 13"><defs><linearGradient id="g8292ae" x1="0" y1="0" x2="0" y2="1"><stop offset="0" stop-color="#8292ae"/><stop offset="1" stop-color="#56667f"/></linearGradient></defs><path d="M1.500 2.600V1.100q0-.6.600-.6h5.300q.6 0 .6.600v1.500z" fill="#7282a0" stroke="#3a4761" stroke-width="1"/><path d="M1.300 2.500h13.400q.8 0 .8.800v8.400q0 .8-.8.800H1.300q-.8 0-.8-.8V3.300q0-.8.800-.8z" fill="url(#g8292ae)" stroke="#3a4761" stroke-width="1"/><path d="M1.300 3.500h13.400" stroke="#fff" stroke-width=".6" opacity=".22"/></svg>
<span class="t tr" style="left:54.25px;top:453.00px;font-size:13px;line-height:16px;letter-spacing:0.000px;transform:scaleX(0.9450);transform-origin:0 0;">Tutorial - FLIM Data</span>
<div class="cnt" style="left:163px;top:452px;width:13px"></div>
<span class="t" style="left:165.80px;top:453.00px;font-size:13px;line-height:16px;letter-spacing:0.000px;transform:scaleX(0.9200);transform-origin:0 0;color:#8e939b;">2</span>
<svg style="left:35px;top:475px" width="16" height="13" viewBox="0 0 16 13"><defs><linearGradient id="g8fb86e" x1="0" y1="0" x2="0" y2="1"><stop offset="0" stop-color="#8fb86e"/><stop offset="1" stop-color="#74a055"/></linearGradient></defs><path d="M1.500 2.600V1.100q0-.6.600-.6h5.300q.6 0 .6.600v1.500z" fill="#6f9a52" stroke="#446e2c" stroke-width="1"/><path d="M1.300 2.500h13.400q.8 0 .8.800v8.400q0 .8-.8.800H1.300q-.8 0-.8-.8V3.300q0-.8.800-.8z" fill="url(#g8fb86e)" stroke="#446e2c" stroke-width="1"/><path d="M1.300 3.500h13.400" stroke="#fff" stroke-width=".6" opacity=".22"/></svg>
<span class="t tr" style="left:54.00px;top:473.00px;font-size:13px;line-height:16px;letter-spacing:0.000px;transform:scaleX(0.9603);transform-origin:0 0;">Results</span>
<svg style="left:27px;top:497px" width="3.500" height="6.400" viewBox="0 0 3.500 6.400"><path d="M0 0v6.400L3.500 3.200z" fill="#9da8bf"/></svg>
<svg style="left:35px;top:495px" width="16" height="13" viewBox="0 0 16 13"><defs><linearGradient id="gd9a672" x1="0" y1="0" x2="0" y2="1"><stop offset="0" stop-color="#d9a672"/><stop offset="1" stop-color="#b9834e"/></linearGradient></defs><path d="M1.500 2.600V1.100q0-.6.600-.6h5.300q.6 0 .6.600v1.500z" fill="#c08a55" stroke="#8c5a2c" stroke-width="1"/><path d="M1.300 2.500h13.400q.8 0 .8.800v8.400q0 .8-.8.800H1.300q-.8 0-.8-.8V3.300q0-.8.800-.8z" fill="url(#gd9a672)" stroke="#8c5a2c" stroke-width="1"/><path d="M1.300 3.500h13.400" stroke="#fff" stroke-width=".6" opacity=".22"/></svg>
<span class="t tr" style="left:53.94px;top:493.00px;font-size:13px;line-height:16px;letter-spacing:0.000px;transform:scaleX(0.9503);transform-origin:0 0;">Orphaned Images</span>
<div class="cnt" style="left:153px;top:492px;width:13px"></div>
<span class="t" style="left:156.30px;top:493.00px;font-size:13px;line-height:16px;letter-spacing:0.000px;transform:scaleX(0.9200);transform-origin:0 0;color:#8e939b;">1</span>
<div id="center"></div>
<div id="cfilter"></div>
<div id="finput"></div>
<span class="t" style="left:361.95px;top:113.00px;font-size:13.5px;line-height:17px;letter-spacing:0.000px;transform:scaleX(0.9741);transform-origin:0 0;color:#6a6a6a;">Filter Images</span>
<div id="vt"><i></i></div>
<svg style="left:737px;top:110px" width="52" height="22" viewBox="737 110 52 22"><g fill="#c7cfde" stroke="#3b404d" stroke-width="1.050"><rect x="745.600" y="116.600" width="2.800" height="2.800"/><rect x="752.600" y="116.600" width="2.800" height="2.800"/><rect x="745.600" y="123.600" width="2.800" height="2.800"/><rect x="752.600" y="123.600" width="2.800" height="2.800"/></g><path d="M770 116.500h11.100M770 119.500h11.100M770 122.450h11.100M770 125.400h11.100" stroke="#3b404d" stroke-width="1.100"/></svg>
<svg width="0" height="0" style="left:0;top:0"><defs><filter id="bl2_4" x="-60%" y="-60%" width="220%" height="220%"><feGaussianBlur stdDeviation="2.4"/></filter><filter id="bl2" x="-60%" y="-60%" width="220%" height="220%"><feGaussianBlur stdDeviation="2"/></filter><filter id="bl0_9" x="-60%" y="-60%" width="220%" height="220%"><feGaussianBlur stdDeviation="0.9"/></filter><filter id="bl3" x="-60%" y="-60%" width="220%" height="220%"><feGaussianBlur stdDeviation="3"/></filter><filter id="bl1_1" x="-60%" y="-60%" width="220%" height="220%"><feGaussianBlur stdDeviation="1.1"/></filter><filter id="bl0_7" x="-60%" y="-60%" width="220%" height="220%"><feGaussianBlur stdDeviation="0.7"/></filter><filter id="bl2_5" x="-60%" y="-60%" width="220%" height="220%"><feGaussianBlur stdDeviation="2.5"/></filter><filter id="bl1_6" x="-60%" y="-60%" width="220%" height="220%"><feGaussianBlur stdDeviation="1.6"/></filter><filter id="bl1_5" x="-60%" y="-60%" width="220%" height="220%"><feGaussianBlur stdDeviation="1.5"/></filter><filter id="bl0_8" x="-60%" y="-60%" width="220%" height="220%"><feGaussianBlur stdDeviation="0.8"/></filter><filter id="bl1_4" x="-60%" y="-60%" width="220%" height="220%"><feGaussianBlur stdDeviation="1.4"/></filter><filter id="bl1_8" x="-60%" y="-60%" width="220%" height="220%"><feGaussianBlur stdDeviation="1.8"/></filter><filter id="bl1_2" x="-60%" y="-60%" width="220%" height="220%"><feGaussianBlur stdDeviation="1.2"/></filter><filter id="bl2_6" x="-60%" y="-60%" width="220%" height="220%"><feGaussianBlur stdDeviation="2.6"/></filter><filter id="bl1_7" x="-60%" y="-60%" width="220%" height="220%"><feGaussianBlur stdDeviation="1.7"/></filter><filter id="bl0_6" x="-60%" y="-60%" width="220%" height="220%"><feGaussianBlur stdDeviation="0.6"/></filter><filter id="bl1" x="-60%" y="-60%" width="220%" height="220%"><feGaussianBlur stdDeviation="1"/></filter><filter id="bl2_2" x="-60%" y="-60%" width="220%" height="220%"><feGaussianBlur stdDeviation="2.2"/></filter><filter id="bl3_4" x="-60%" y="-60%" width="220%" height="220%"><feGaussianBlur stdDeviation="3.4"/></filter><filter id="bl4" x="-60%" y="-60%" width="220%" height="220%"><feGaussianBlur stdDeviation="4"/></filter><filter id="bl5" x="-60%" y="-60%" width="220%" height="220%"><feGaussianBlur stdDeviation="5"/></filter><filter id="bl6" x="-60%" y="-60%" width="220%" height="220%"><feGaussianBlur stdDeviation="6"/></filter><filter id="bl7" x="-60%" y="-60%" width="220%" height="220%"><feGaussianBlur stdDeviation="7"/></filter><filter id="bl8" x="-60%" y="-60%" width="220%" height="220%"><feGaussianBlur stdDeviation="8"/></filter><filter id="mot" x="-25%" y="-25%" width="150%" height="150%"><feGaussianBlur in="SourceGraphic" stdDeviation="2.1" result="b"/><feTurbulence type="fractalNoise" baseFrequency="0.16" numOctaves="2" seed="7" result="n"/><feColorMatrix in="n" type="matrix" values="0 0 0 0 0 0 0 0 0 0 0 0 0 0 0 6 0 0 0 -2.6" result="na"/><feComposite in="b" in2="na" operator="in" result="m"/><feColorMatrix in="b" type="matrix" values="1 0 0 0 0 0 1 0 0 0 0 0 1 0 0 0 0 0 0.45 0" result="d"/><feMerge result="r"><feMergeNode in="d"/><feMergeNode in="m"/></feMerge><feGaussianBlur in="r" stdDeviation="0.95"/></filter><filter id="mot2" x="-25%" y="-25%" width="150%" height="150%"><feGaussianBlur in="SourceGraphic" stdDeviation="2.6" result="b"/><feTurbulence type="fractalNoise" baseFrequency="0.11" numOctaves="2" seed="3" result="n"/><feColorMatrix in="n" type="matrix" values="0 0 0 0 0 0 0 0 0 0 0 0 0 0 0 5 0 0 0 -2.1" result="na"/><feComposite in="b" in2="na" operator="in" result="m"/><feColorMatrix in="b" type="matrix" values="1 0 0 0 0 0 1 0 0 0 0 0 1 0 0 0 0 0 0.5 0" result="d"/><feMerge result="r"><feMergeNode in="d"/><feMergeNode in="m"/></feMerge><feGaussianBlur in="r" stdDeviation="1"/></filter><filter id="spk" x="-10%" y="-10%" width="120%" height="120%"><feTurbulence type="fractalNoise" baseFrequency="0.45" numOctaves="1" seed="11" result="n"/><feColorMatrix in="n" type="matrix" values="0 0 0 0 0 0 0 0 0 0 0 0 0 0 0 9 0 0 0 -4.700" result="na"/><feComposite in="SourceGraphic" in2="na" operator="in" result="m"/><feGaussianBlur in="m" stdDeviation=".5"/></filter><radialGradient id="rg2a0a0860"><stop offset="0" stop-color="#2a0a08" stop-opacity="0.6"/><stop offset=".45" stop-color="#2a0a08" stop-opacity="0.480"/><stop offset=".75" stop-color="#2a0a08" stop-opacity="0.180"/><stop offset="1" stop-color="#2a0a08" stop-opacity="0"/></radialGradient><radialGradient id="rg1c090950"><stop offset="0" stop-color="#1c0909" stop-opacity="0.5"/><stop offset=".45" stop-color="#1c0909" stop-opacity="0.400"/><stop offset=".75" stop-color="#1c0909" stop-opacity="0.150"/><stop offset="1" stop-color="#1c0909" stop-opacity="0"/></radialGradient><radialGradient id="rg1a240e80"><stop offset="0" stop-color="#1a240e" stop-opacity="0.8"/><stop offset=".45" stop-color="#1a240e" stop-opacity="0.640"/><stop offset=".75" stop-color="#1a240e" stop-opacity="0.240"/><stop offset="1" stop-color="#1a240e" stop-opacity="0"/></radialGradient><radialGradient id="rg20220c85"><stop offset="0" stop-color="#20220c" stop-opacity="0.85"/><stop offset=".45" stop-color="#20220c" stop-opacity="0.680"/><stop offset=".75" stop-color="#20220c" stop-opacity="0.255"/><stop offset="1" stop-color="#20220c" stop-opacity="0"/></radialGradient><radialGradient id="rg160e5875"><stop offset="0" stop-color="#160e58" stop-opacity="0.75"/><stop offset=".45" stop-color="#160e58" stop-opacity="0.600"/><stop offset=".75" stop-color="#160e58" stop-opacity="0.225"/><stop offset="1" stop-color="#160e58" stop-opacity="0"/></radialGradient><radialGradient id="rg171d0a75"><stop offset="0" stop-color="#171d0a" stop-opacity="0.75"/><stop offset=".45" stop-color="#171d0a" stop-opacity="0.600"/><stop offset=".75" stop-color="#171d0a" stop-opacity="0.225"/><stop offset="1" stop-color="#171d0a" stop-opacity="0"/></radialGradient><radialGradient id="rg1f090960"><stop offset="0" stop-color="#1f0909" stop-opacity="0.6"/><stop offset=".45" stop-color="#1f0909" stop-opacity="0.480"/><stop offset=".75" stop-color="#1f0909" stop-opacity="0.180"/><stop offset="1" stop-color="#1f0909" stop-opacity="0"/></radialGradient><radialGradient id="rg2a0b0870"><stop offset="0" stop-color="#2a0b08" stop-opacity="0.7"/><stop offset=".45" stop-color="#2a0b08" stop-opacity="0.560"/><stop offset=".75" stop-color="#2a0b08" stop-opacity="0.210"/><stop offset="1" stop-color="#2a0b08" stop-opacity="0"/></radialGradient><radialGradient id="rg140a1050"><stop offset="0" stop-color="#140a10" stop-opacity="0.5"/><stop offset=".45" stop-color="#140a10" stop-opacity="0.400"/><stop offset=".75" stop-color="#140a10" stop-opacity="0.150"/><stop offset="1" stop-color="#140a10" stop-opacity="0"/></radialGradient><radialGradient id="rg220c0c60"><stop offset="0" stop-color="#220c0c" stop-opacity="0.6"/><stop offset=".45" stop-color="#220c0c" stop-opacity="0.480"/><stop offset=".75" stop-color="#220c0c" stop-opacity="0.180"/><stop offset="1" stop-color="#220c0c" stop-opacity="0"/></radialGradient></defs></svg>
<div class="th" style="left:356px;top:141px"><svg width="90" height="90" viewBox="0 0 90 90" style="overflow:hidden"><rect width="90" height="90" fill="#050304"/><ellipse cx="43" cy="46" rx="27.7" ry="63.7" fill="url(#rg2a0a0860)" transform="rotate(0 43 46)"/><ellipse cx="45.5" cy="48" rx="19" ry="9.5" fill="#2b18e6" opacity="1" transform="rotate(6 45.5 48)" filter="url(#mot2)"/><ellipse cx="44" cy="48" rx="10" ry="6" fill="#2b18e6" opacity="0.6" transform="rotate(0 44 48)" filter="url(#bl2_4)"/><ellipse cx="59" cy="55" rx="6" ry="4" fill="#2b18e6" opacity="0.75" transform="rotate(25 59 55)" filter="url(#bl2)"/><path d="M46.300 27C33.500 34 31.500 52 42 61" fill="none" stroke="#3f9a2c" stroke-width="1.8" opacity="0.9" stroke-linecap="round" filter="url(#bl0_9)"/><path d="M46.300 27C58 35 57 52 42 61" fill="none" stroke="#358a2a" stroke-width="1.5" opacity="0.7" stroke-linecap="round" filter="url(#bl0_9)"/><path d="M46 29C42 38 41 50 42 60" fill="none" stroke="#2f7a3a" stroke-width="1.2" opacity="0.45" stroke-linecap="round" filter="url(#bl0_9)"/><path d="M46 29C50 38 49 52 42 60" fill="none" stroke="#2f7a3a" stroke-width="1.2" opacity="0.4" stroke-linecap="round" filter="url(#bl0_9)"/><ellipse cx="46.3" cy="26.8" rx="2.2" ry="2.2" fill="#a8a030" opacity="0.95" transform="rotate(0 46.3 26.8)" filter="url(#bl0_9)"/><ellipse cx="41.8" cy="61" rx="2.4" ry="2.4" fill="#a8c830" opacity="1" transform="rotate(0 41.8 61)" filter="url(#bl0_9)"/></svg></div>
<div class="th s" style="left:468px;top:141px"><svg width="90" height="90" viewBox="0 0 90 90" style="overflow:hidden"><rect width="90" height="90" fill="#070507"/><ellipse cx="50" cy="50" rx="44.8" ry="44.8" fill="url(#rg1c090950)" transform="rotate(0 50 50)"/><ellipse cx="46" cy="47" rx="14" ry="21" fill="#2416c8" opacity="0.95" transform="rotate(-32 46 47)" filter="url(#mot2)"/><ellipse cx="40" cy="55" rx="7" ry="8" fill="#2b18e6" opacity="0.55" transform="rotate(0 40 55)" filter="url(#bl3)"/><ellipse cx="56" cy="34" rx="5" ry="8" fill="#1f14b0" opacity="0.5" transform="rotate(-35 56 34)" filter="url(#bl3)"/><path d="M33.500 27.500L46 42L40.500 45.500L36 38Z" fill="#36962a" opacity="0.85" filter="url(#bl1_1)"/><path d="M33.500 27.500C38 30 43 35 45.500 41" fill="none" stroke="#3fae2c" stroke-width="1.2" opacity="0.8" stroke-linecap="round" filter="url(#bl0_7)"/><path d="M34 28C36 33 38 39 40 44" fill="none" stroke="#3fae2c" stroke-width="1.1" opacity="0.7" stroke-linecap="round" filter="url(#bl0_7)"/><ellipse cx="33.5" cy="27.8" rx="2.1" ry="2.1" fill="#8ed04a" opacity="1" transform="rotate(0 33.5 27.8)" filter="url(#bl0_9)"/><path d="M58.800 59L46.500 50.500L49 57L54 60Z" fill="#36962a" opacity="0.85" filter="url(#bl1_1)"/><ellipse cx="58.4" cy="59" rx="2.2" ry="2.2" fill="#86d03a" opacity="1" transform="rotate(0 58.4 59)" filter="url(#bl0_9)"/></svg></div>
<div class="th" style="left:580px;top:141px"><svg width="90" height="90" viewBox="0 0 90 90" style="overflow:hidden"><rect width="90" height="90" fill="#020202"/><ellipse cx="48" cy="48" rx="25" ry="11" fill="#2a20d0" opacity="0.9" transform="rotate(22 48 48)" filter="url(#mot2)"/><ellipse cx="64" cy="55" rx="9" ry="5" fill="#2a20d0" opacity="0.7" transform="rotate(5 64 55)" filter="url(#bl2_4)"/><ellipse cx="38" cy="40" rx="7" ry="5" fill="#1f14b0" opacity="0.6" transform="rotate(0 38 40)" filter="url(#bl2_5)"/><ellipse cx="34" cy="45.5" rx="6" ry="3" fill="#3aa628" opacity="0.55" transform="rotate(20 34 45.5)" filter="url(#bl1_6)"/><ellipse cx="55" cy="57.5" rx="6" ry="3" fill="#3aa628" opacity="0.6" transform="rotate(15 55 57.5)" filter="url(#bl1_6)"/><ellipse cx="70" cy="48" rx="2.5" ry="5" fill="#2a7a22" opacity="0.45" transform="rotate(20 70 48)" filter="url(#bl1_5)"/><ellipse cx="36" cy="34" rx="2" ry="5" fill="#2a7a22" opacity="0.4" transform="rotate(0 36 34)" filter="url(#bl1_5)"/><ellipse cx="31.3" cy="44.4" rx="2.1" ry="2.1" fill="#9af060" opacity="1" transform="rotate(0 31.3 44.4)" filter="url(#bl0_8)"/><ellipse cx="57.6" cy="58.4" rx="2.3" ry="2.3" fill="#a0f050" opacity="1" transform="rotate(0 57.6 58.4)" filter="url(#bl0_8)"/><path d="M15.500 60.500L25.500 74" fill="none" stroke="#2f8a22" stroke-width="1.4" opacity="0.65" stroke-linecap="round" filter="url(#bl0_7)"/></svg></div>
<div class="th" style="left:692px;top:141px"><svg width="90" height="90" viewBox="0 0 90 90" style="overflow:hidden"><rect width="90" height="90" fill="#0a0906"/><ellipse cx="34" cy="30" rx="22.5" ry="31.8" fill="url(#rg1a240e80)" transform="rotate(-25 34 30)"/><ellipse cx="56" cy="68" rx="30.6" ry="19.5" fill="url(#rg20220c85)" transform="rotate(30 56 68)"/><ellipse cx="5" cy="82" rx="16.5" ry="22.5" fill="url(#rg160e5875)" transform="rotate(0 5 82)"/><ellipse cx="33" cy="26.5" rx="9.5" ry="7" fill="#2b18e6" opacity="1" transform="rotate(-28 33 26.5)" filter="url(#bl2)"/><ellipse cx="27.5" cy="30" rx="4.5" ry="4.5" fill="#2b18e6" opacity="0.9" transform="rotate(0 27.5 30)" filter="url(#bl1_6)"/><ellipse cx="50.5" cy="62" rx="11" ry="5.6" fill="#2b18e6" opacity="1" transform="rotate(4 50.5 62)" filter="url(#bl2)"/><path d="M35 32L43 33L45.500 44.500L54 55L44 57L43.500 45.500Z" fill="#36902a" opacity="0.75" filter="url(#bl1_4)"/><path d="M39 35L44.500 45L43 37Z" fill="#5ab83a" opacity="0.6" filter="url(#bl0_8)"/><path d="M45 46L48.500 55L46 54Z" fill="#5ab83a" opacity="0.5" filter="url(#bl0_8)"/></svg></div>
<div class="th" style="left:356px;top:253px"><svg width="90" height="90" viewBox="0 0 90 90" style="overflow:hidden"><rect width="90" height="90" fill="#060505"/><ellipse cx="45" cy="48" rx="50.0" ry="23.6" fill="url(#rg171d0a75)" transform="rotate(0 45 48)"/><path d="M27 38L45.300 45L62 35L66 58L45.300 46.500L27 58Z" fill="#2f8a26" opacity="0.6" filter="url(#bl1_8)"/><path d="M45.300 45.500L62 40L62 52Z" fill="#3fae2c" opacity="0.5" filter="url(#bl1_4)"/><ellipse cx="23.5" cy="48" rx="8.5" ry="12.5" fill="#2b18e6" opacity="1" transform="rotate(0 23.5 48)" filter="url(#mot2)"/><ellipse cx="65.5" cy="46" rx="8" ry="13" fill="#2b18e6" opacity="1" transform="rotate(0 65.5 46)" filter="url(#mot2)"/><ellipse cx="71.5" cy="46" rx="1.5" ry="5" fill="#3fae2c" opacity="0.5" transform="rotate(0 71.5 46)" filter="url(#bl1_2)"/><ellipse cx="45.3" cy="45.5" rx="2.6" ry="2.6" fill="#a85a18" opacity="0.8" transform="rotate(0 45.3 45.5)" filter="url(#bl1_6)"/></svg></div>
<div class="th" style="left:468px;top:253px"><svg width="90" height="90" viewBox="0 0 90 90" style="overflow:hidden"><rect width="90" height="90" fill="#03040a"/><ellipse cx="55" cy="44" rx="26.7" ry="42.2" fill="url(#rg1f090960)" transform="rotate(0 55 44)"/><ellipse cx="43.5" cy="41" rx="5.5" ry="9" fill="#2b18e6" opacity="0.95" transform="rotate(0 43.5 41)" filter="url(#bl2_4)"/><ellipse cx="64.5" cy="31.5" rx="5.5" ry="9" fill="#2b18e6" opacity="0.95" transform="rotate(10 64.5 31.5)" filter="url(#bl2_4)"/><ellipse cx="54" cy="37" rx="11" ry="13" fill="#2622b0" opacity="0.8" transform="rotate(0 54 37)" filter="url(#mot)"/><path d="M52 26C57 26 58 33 56 39" fill="none" stroke="#3a8a78" stroke-width="1.3" opacity="0.55" stroke-linecap="round" filter="url(#bl0_8)"/><path d="M51 46C55 50 60 48 60 44" fill="none" stroke="#3fa040" stroke-width="1.6" opacity="0.75" stroke-linecap="round" filter="url(#bl0_8)"/></svg></div>
<div class="th" style="left:580px;top:253px"><svg width="90" height="90" viewBox="0 0 90 90" style="overflow:hidden"><rect width="90" height="90" fill="#040308"/><ellipse cx="45" cy="47" rx="32.6" ry="37.6" fill="url(#rg2a0b0870)" transform="rotate(0 45 47)"/><ellipse cx="42" cy="46" rx="19" ry="20" fill="#2b18e6" opacity="1" transform="rotate(0 42 46)" filter="url(#mot)"/><ellipse cx="34" cy="42" rx="6" ry="8" fill="#2b18e6" opacity="0.6" transform="rotate(0 34 42)" filter="url(#bl2_4)"/><ellipse cx="47" cy="56" rx="8" ry="5" fill="#2b18e6" opacity="0.6" transform="rotate(0 47 56)" filter="url(#bl2_4)"/><ellipse cx="50" cy="36" rx="5" ry="4" fill="#2b18e6" opacity="0.5" transform="rotate(0 50 36)" filter="url(#bl2)"/><ellipse cx="46" cy="45.5" rx="3.8" ry="6" fill="#3a7a30" opacity="0.7" transform="rotate(0 46 45.5)" filter="url(#bl1_8)"/><ellipse cx="24" cy="25" rx="3" ry="3" fill="#0c200c" opacity="0.8" transform="rotate(0 24 25)" filter="url(#bl2)"/></svg></div>
<div class="th" style="left:692px;top:253px"><svg width="90" height="90" viewBox="0 0 90 90" style="overflow:hidden"><rect width="90" height="90" fill="#060905"/><path d="M1 74C14 62 20 36 34 22C46 15 66 16 78 27C83 42 78 62 64 73C42 78 22 75 1 74Z" fill="#263818" opacity="0.95" filter="url(#bl2_5)"/><path d="M1 74C14 62 20 36 34 22C46 15 66 16 78 27C83 42 78 62 64 73C42 78 22 75 1 74Z" fill="#4a8a30" opacity=".2" filter="url(#spk)"/><ellipse cx="46" cy="46" rx="6" ry="24" fill="#3350e0" opacity="0.9" transform="rotate(-27 46 46)" filter="url(#bl2_4)"/><ellipse cx="40" cy="30" rx="5" ry="6" fill="#3a60e0" opacity="0.7" transform="rotate(-30 40 30)" filter="url(#bl2)"/><ellipse cx="88.5" cy="48" rx="5.5" ry="26" fill="#1d2ba0" opacity="0.9" transform="rotate(4 88.5 48)" filter="url(#bl2_6)"/><path d="M76 66C80 74 82 82 86 90M80 68C84 76 86 82 90 88" stroke="#2c9c2c" stroke-width="5" opacity=".6" fill="none" filter="url(#spk)"/></svg></div>
<div class="th" style="left:356px;top:365px"><svg width="90" height="90" viewBox="0 0 90 90" style="overflow:hidden"><rect width="90" height="90" fill="#070509"/><ellipse cx="44" cy="50" rx="38.8" ry="38.8" fill="url(#rg140a1050)" transform="rotate(0 44 50)"/><path d="M18 38C21 27 34 25 44 29C54 25 65 31 65 42C63 51 57 55 53 63C51 71 48 76 45 76C40 74 36 65 30 59C22 53 16 47 18 38Z" fill="#2b18e6" opacity="1" filter="url(#mot)"/><ellipse cx="40" cy="44" rx="12" ry="9" fill="#2b18e6" opacity="0.35" transform="rotate(0 40 44)" filter="url(#bl3)"/><ellipse cx="36" cy="24.5" rx="2.6" ry="2.6" fill="#8a1414" opacity="0.6" transform="rotate(0 36 24.5)" filter="url(#bl1_8)"/><ellipse cx="56" cy="58" rx="2.6" ry="3.4" fill="#8a1414" opacity="0.6" transform="rotate(0 56 58)" filter="url(#bl1_8)"/></svg></div>
<div class="th" style="left:468px;top:365px"><svg width="90" height="90" viewBox="0 0 90 90" style="overflow:hidden"><rect width="90" height="90" fill="#0a060a"/><ellipse cx="56" cy="40" rx="49.2" ry="32.8" fill="url(#rg220c0c60)" transform="rotate(0 56 40)"/><path d="M18 46C21 37 34 35 40 31C48 25 57 29 59 38C63 43 75 43 75 48C71 55 63 55 57 61C50 67 42 63 36 59C28 57 19 55 18 46Z" fill="#2b18e6" opacity="1" filter="url(#mot)"/><ellipse cx="44" cy="47" rx="12" ry="9" fill="#2b18e6" opacity="0.35" transform="rotate(0 44 47)" filter="url(#bl3)"/><ellipse cx="61.7" cy="45.5" rx="2.8" ry="2.6" fill="#a01818" opacity="0.75" transform="rotate(0 61.7 45.5)" filter="url(#bl1_7)"/><ellipse cx="55" cy="31.5" rx="2" ry="2.6" fill="#8a1414" opacity="0.55" transform="rotate(0 55 31.5)" filter="url(#bl1_7)"/></svg></div>
<div class="hd" style="left:354px"></div>
<div class="hd" style="left:356px"></div>
<div class="hd" style="left:802px"></div>
<div class="hd" style="left:804px"></div>
<div id="cbot"></div>
<div class="cb" style="left:350px;border-radius:0 3px 3px 0"></div>
<div class="cb" style="left:796px;border-radius:3px 0 0 3px"></div>
<svg style="left:355px;top:827px" width="4" height="12" viewBox="0 0 4 12"><path d="M3.500 0v5L0 2.500zM3.500 6v5L0 8.500z" fill="#4c5873"/></svg>
<svg style="left:801px;top:827px" width="4" height="12" viewBox="0 0 4 12"><path d="M0 0v5L3.500 2.500zM0 6v5L3.500 8.500z" fill="#4c5873"/></svg>
<div id="strack"></div><div id="sthumb"></div>
<div id="right"></div>
<div id="rborder"></div>
<span class="t tabt on" style="left:821.76px;top:84.00px;font-size:11px;line-height:14px;letter-spacing:0.056px;font-weight:bold;">General</span>
<span class="t tabt" style="left:887.52px;top:84.00px;font-size:11px;line-height:14px;letter-spacing:0.044px;font-weight:bold;">Acquisition</span>
<span class="t tabt" style="left:972.49px;top:84.00px;font-size:11px;line-height:14px;letter-spacing:-0.020px;font-weight:bold;">Preview</span>
<div class="btn" style="left:826px;top:117px;width:73px;height:20px"></div>
<span class="t" style="left:833.78px;top:120.20px;font-size:11px;line-height:14px;letter-spacing:0.021px;font-weight:bold;color:#333;">Full viewer</span>
<div class="btn" style="left:1006px;top:119px;width:22px;height:20px"></div>
<div class="btn" style="left:1035px;top:119px;width:27px;height:20px"></div>
<div class="btn" style="left:1069px;top:119px;width:27px;height:20px"></div>
<div class="btn" style="left:1105px;top:119px;width:22px;height:20px"></div>
<div class="btn" style="left:1134px;top:119px;width:31px;height:20px"></div>
<svg style="left:1006px;top:119px" width="22" height="20" viewBox="1006 119 22 20"><g fill="#2e2e2e"><rect x="1012.40" y="124.20" width="3" height="3.2"/><rect x="1012.40" y="128.10" width="3" height="3.2"/><rect x="1012.40" y="132.00" width="3" height="3.2"/><rect x="1016.15" y="124.20" width="3" height="3.2"/><rect x="1016.15" y="128.10" width="3" height="3.2"/><rect x="1016.15" y="132.00" width="3" height="3.2"/><rect x="1019.90" y="124.20" width="3" height="3.2"/><rect x="1019.90" y="128.10" width="3" height="3.2"/><rect x="1019.90" y="132.00" width="3" height="3.2"/></g></svg>
<svg style="left:1041px;top:122px" width="16" height="14" viewBox="0 0 16 14"><g fill="none" stroke="#333" stroke-width="1.100"><rect x="5.600" y=".6" width="4.800" height="3.200"/><path d="M8 3.800v3M2.500 9.800V6.800h11v3M8 6.800v3"/></g><g fill="#333"><rect x=".4" y="9.600" width="4.200" height="3.400"/><rect x="5.900" y="9.600" width="4.200" height="3.400"/><rect x="11.400" y="9.600" width="4.200" height="3.400"/></g></svg>
<span class="t" style="left:1072.53px;top:122.00px;font-size:13px;line-height:16px;letter-spacing:0.901px;font-weight:bold;color:#333;font-style:italic;">/../.</span>
<svg style="left:1109px;top:123px" width="14" height="12" viewBox="0 0 14 12"><path d="M4.400.6h5.200v4.600h3.600L7 11.400.8 5.200h3.600z" fill="#333"/></svg>
<svg style="left:1137px;top:123px" width="26" height="12" viewBox="0 0 26 12"><g fill="none" stroke="#333" stroke-width="2"><path d="M10 3V2.400q0-1.200-1.200-1.200H2.400q-1.200 0-1.200 1.200v7.200q0 1.200 1.200 1.200h6.400q1.200 0 1.200-1.200V9"/><path d="M16 3V2.400q0-1.200 1.200-1.200h6.400q1.200 0 1.200 1.200v7.200q0 1.200-1.200 1.200h-6.400q-1.200 0-1.200-1.200V9"/><path d="M7.500 6h11" stroke-width="2.400"/></g></svg>
<span class="t" style="left:823.70px;top:155.00px;font-size:15px;line-height:19px;letter-spacing:-0.012px;color:#3f3f3f;">P-TRE_19_R3D_D3D.dv</span>
<div class="btn" style="left:1143px;top:153px;width:22px;height:20px"></div>
<svg style="left:1148px;top:157px" width="12" height="12" viewBox="0 0 12 12"><path d="M2.200 9.800l1.200-3 5-5 2.400 2.400-5 5z" fill="#3a3a3a"/><path d="M1.600 10.400l.5-1.300 1.100 1.100z" fill="#3a3a3a"/></svg>
<div class="hr" style="top:184px"></div>
<span class="t k" style="left:823.88px;top:195.00px;font-size:11px;line-height:14px;letter-spacing:0.113px;font-weight:bold;">Image ID:</span>
<span class="t" style="left:904.86px;top:195.00px;font-size:11px;line-height:14px;letter-spacing:0.000px;transform:scaleX(1.0204);transform-origin:0 0;font-weight:bold;color:#5d6677;">2</span>
<span class="t k" style="left:824.16px;top:211.00px;font-size:11px;line-height:14px;letter-spacing:0.098px;font-weight:bold;">Owner:</span>
<span class="t v" style="left:904.92px;top:211.00px;font-size:11px;line-height:14px;letter-spacing:-0.037px;">Polly Stack</span>
<div class="a" style="left:1087.500px;top:206px;width:79.500px;height:18px;border-radius:4.500px;background:#fff;border:1px solid #b2b2b6;border-bottom-color:#a2a2a6;overflow:hidden"><div class="a" style="right:-1px;top:-1px;width:15px;height:18px;background:linear-gradient(#949498,#78787c)"></div></div>
<svg style="left:1156px;top:209px" width="8" height="12" viewBox="0 0 8 12"><path d="M1.200 4.600L4 1.800l2.800 2.800M1.200 7.400L4 10.200l2.800-2.800" fill="none" stroke="#fff" stroke-width="1.300" stroke-linecap="round" stroke-linejoin="round"/></svg>
<span class="t" style="left:1094.98px;top:208.30px;font-size:11.5px;line-height:14px;letter-spacing:0.034px;color:#000;-webkit-text-stroke:.25px #000;">Show all</span>
<div class="acc" style="top:234px"></div>
<span class="t" style="left:831.25px;top:240.00px;font-size:15px;line-height:19px;letter-spacing:0.046px;color:#3c3c3c;">Image Details</span>
<svg style="left:1149px;top:248px" width="8" height="5" viewBox="0 0 8 5"><path d="M.4.400h7.200L4 4.400z" fill="#111"/></svg>
<span class="t" style="left:824.28px;top:280.00px;font-size:13px;line-height:16px;letter-spacing:-0.004px;color:#555;">collected with critical illumination</span>
<div class="btn" style="left:1143px;top:280px;width:22px;height:20px"></div>
<svg style="left:1148px;top:284px" width="12" height="12" viewBox="0 0 12 12"><path d="M2.200 9.800l1.200-3 5-5 2.400 2.400-5 5z" fill="#3a3a3a"/><path d="M1.600 10.400l.5-1.300 1.100 1.100z" fill="#3a3a3a"/></svg>
<div class="hr" style="top:309px"></div>
<span class="t k" style="left:823.88px;top:320.00px;font-size:11px;line-height:14px;letter-spacing:-0.075px;font-weight:bold;">Import Date:</span>
<span class="t v" style="left:997.65px;top:320.00px;font-size:11px;line-height:14px;letter-spacing:0.011px;">2015-06-18 13:09:44</span>
<span class="t k" style="left:823.88px;top:336.00px;font-size:11px;line-height:14px;letter-spacing:0.039px;font-weight:bold;">Dimensions (XY):</span>
<span class="t v" style="left:997.76px;top:336.00px;font-size:11px;line-height:14px;letter-spacing:0.043px;">512 x 512</span>
<span class="t k" style="left:823.88px;top:352.00px;font-size:11px;line-height:14px;letter-spacing:-0.023px;font-weight:bold;">Pixels Type:</span>
<span class="t v" style="left:997.49px;top:352.00px;font-size:11px;line-height:14px;letter-spacing:0.085px;">int16</span>
<span class="t k" style="left:823.88px;top:368.00px;font-size:11px;line-height:14px;letter-spacing:0.037px;font-weight:bold;">Pixels Size (XYZ) (µm):</span>
<span class="t v" style="left:997.82px;top:368.00px;font-size:11px;line-height:14px;letter-spacing:0.019px;">0.07 x 0.07 x 0.20</span>
<span class="t k" style="left:824.33px;top:384.00px;font-size:11px;line-height:14px;letter-spacing:0.014px;font-weight:bold;">Z-sections/Timepoints:</span>
<span class="t v" style="left:997.76px;top:384.00px;font-size:11px;line-height:14px;letter-spacing:-0.128px;">55 x 1</span>
<span class="t k" style="left:824.16px;top:400.00px;font-size:11px;line-height:14px;letter-spacing:0.037px;font-weight:bold;">Channels:</span>
<span class="t v" style="left:997.98px;top:400.00px;font-size:11px;line-height:14px;letter-spacing:0.005px;">457.0, 528.0, 617.0</span>
<span class="t k" style="left:823.88px;top:416.00px;font-size:11px;line-height:14px;letter-spacing:0.064px;font-weight:bold;">ROI Count:</span>
<span class="t v" style="left:997.80px;top:416.00px;font-size:11px;line-height:14px;letter-spacing:0.000px;transform:scaleX(1.0497);transform-origin:0 0;">0</span>
<div class="btn" style="left:1142px;top:401px;width:18px;height:15px"></div>
<svg style="left:1145px;top:403px" width="12" height="12" viewBox="0 0 12 12"><path d="M2.200 9.800l1.200-3 5-5 2.400 2.400-5 5z" fill="#3a3a3a"/><path d="M1.600 10.400l.5-1.300 1.100 1.100z" fill="#3a3a3a"/></svg>
<div class="acc" style="top:439px"></div>
<span class="t" style="left:832.30px;top:445.00px;font-size:15px;line-height:19px;letter-spacing:-0.208px;color:#3c3c3c;">Tags</span>
<svg style="left:1151px;top:450px" width="5" height="9" viewBox="0 0 5 9"><path d="M.3.400v8.200L4.600 4.500z" fill="#222"/></svg>
<div class="acc" style="top:475px"></div>
<span class="t" style="left:831.40px;top:481.00px;font-size:15px;line-height:19px;letter-spacing:0.021px;color:#3c3c3c;">Key-Value Pairs</span>
<svg style="left:1151px;top:486px" width="5" height="9" viewBox="0 0 5 9"><path d="M.3.400v8.200L4.600 4.500z" fill="#222"/></svg>
<div class="acc" style="top:511px"></div>
<span class="t" style="left:832.60px;top:517.00px;font-size:15px;line-height:19px;letter-spacing:-0.087px;color:#3c3c3c;">Attachments</span>
<svg style="left:1151px;top:522px" width="5" height="9" viewBox="0 0 5 9"><path d="M.3.400v8.200L4.600 4.500z" fill="#222"/></svg>
<div class="acc" style="top:547px"></div>
<span class="t" style="left:831.40px;top:553.00px;font-size:15px;line-height:19px;letter-spacing:0.079px;color:#3c3c3c;">Ratings</span>
<svg style="left:1151px;top:558px" width="5" height="9" viewBox="0 0 5 9"><path d="M.3.400v8.200L4.600 4.500z" fill="#222"/></svg>
<div class="acc" style="top:583px"></div>
<span class="t" style="left:831.85px;top:589.00px;font-size:15px;line-height:19px;letter-spacing:0.021px;color:#3c3c3c;">Comments</span>
<svg style="left:1151px;top:594px" width="5" height="9" viewBox="0 0 5 9"><path d="M.3.400v8.200L4.600 4.500z" fill="#222"/></svg>
</div></div>
</body>
</html>
